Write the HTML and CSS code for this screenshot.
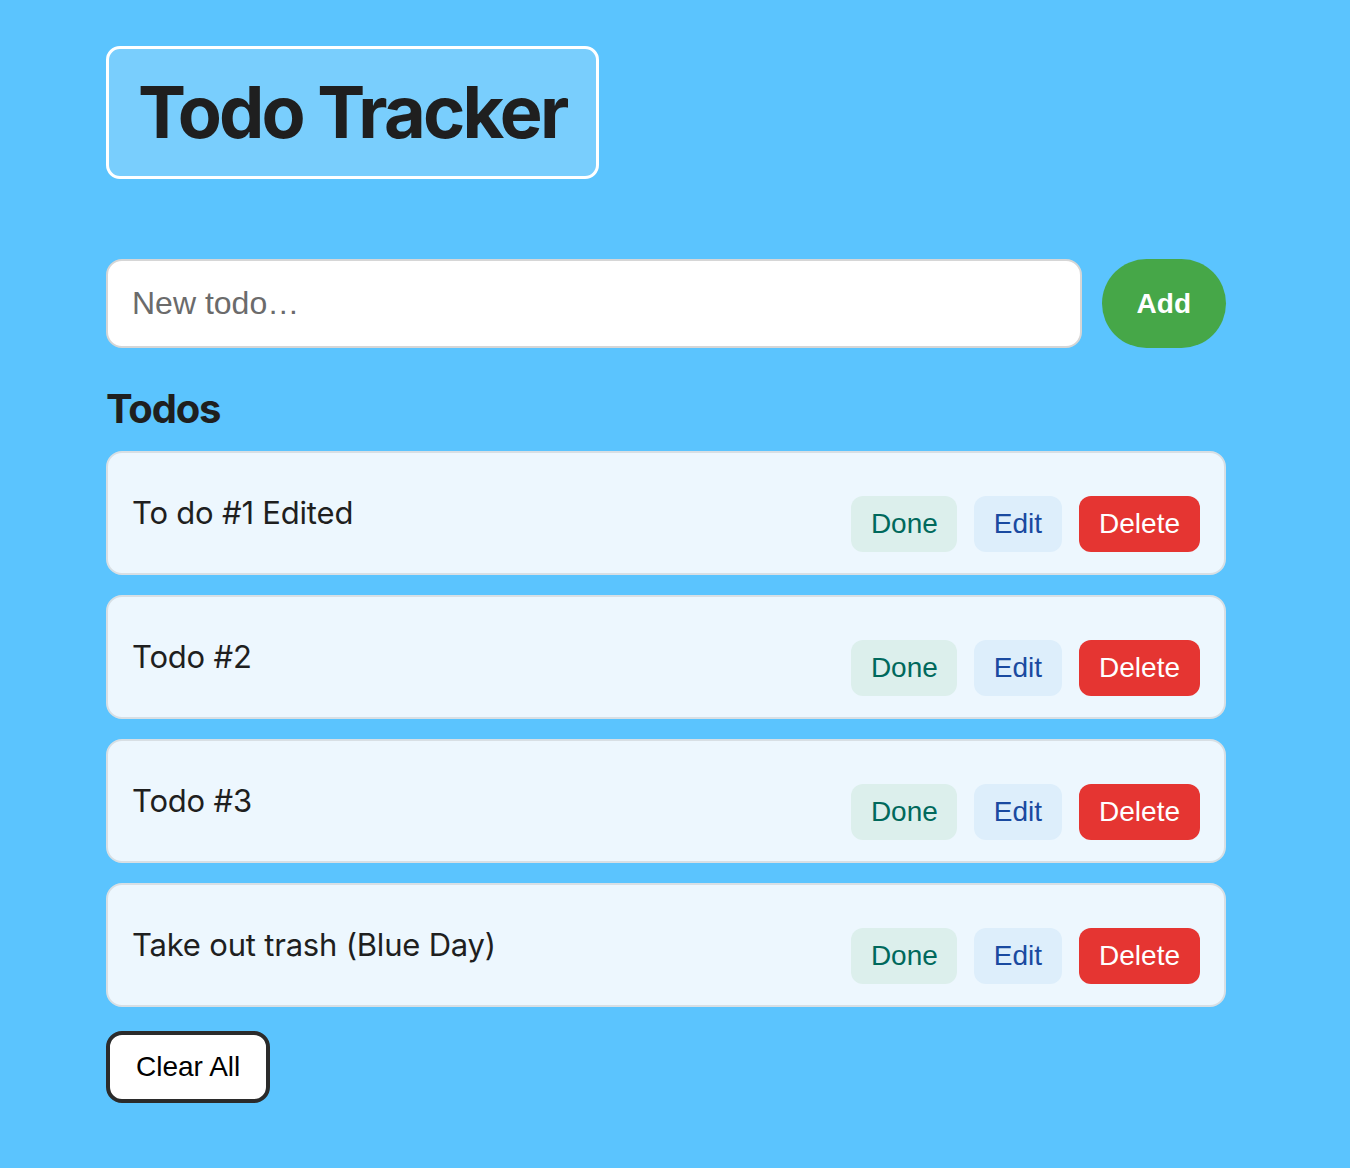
FILE: index.html
```html
<!DOCTYPE html>
<html lang="en">
<head>
    <meta charset="UTF-8">
    <meta name="viewport" content="width=device-width, initial-scale=1.0">
    <title>Todo Tracker</title>
    <link rel="stylesheet" href="styles.css">
</head>
<body>
    <div class="container">
        <h1 class="title">Todo Tracker</h1>

        <form class="add-form" onsubmit="return false;">
            <input type="text" class="todo-input" placeholder="New todo…">
            <button type="submit" class="add-btn">Add</button>
        </form>

        <h2 class="section-title">Todos</h2>

        <ul class="todo-list">
            <li class="todo-item">
                <span class="todo-text">To do #1 Edited</span>
                <div class="todo-actions">
                    <button class="btn btn-done">Done</button>
                    <button class="btn btn-edit">Edit</button>
                    <button class="btn btn-delete">Delete</button>
                </div>
            </li>
            <li class="todo-item">
                <span class="todo-text">Todo #2</span>
                <div class="todo-actions">
                    <button class="btn btn-done">Done</button>
                    <button class="btn btn-edit">Edit</button>
                    <button class="btn btn-delete">Delete</button>
                </div>
            </li>
            <li class="todo-item">
                <span class="todo-text">Todo #3</span>
                <div class="todo-actions">
                    <button class="btn btn-done">Done</button>
                    <button class="btn btn-edit">Edit</button>
                    <button class="btn btn-delete">Delete</button>
                </div>
            </li>
            <li class="todo-item">
                <span class="todo-text">Take out trash (Blue Day)</span>
                <div class="todo-actions">
                    <button class="btn btn-done">Done</button>
                    <button class="btn btn-edit">Edit</button>
                    <button class="btn btn-delete">Delete</button>
                </div>
            </li>
        </ul>

        <button class="clear-btn">Clear All</button>
    </div>
</body>
</html>
```

FILE: styles.css
```css
body {
    font-family: Inter, "Noto Sans", sans-serif;
    background-color: #5bc4fe;
    color: #1f1f1f;
    margin: 0;
    padding: 0;
}

.container {
    width: 1120px;
    margin-left: 106px;
    padding-top: 46px;
    padding-bottom: 40px;
}

/* Titelruta */
.title {
    display: inline-block;
    margin: 0;
    padding: 19px 30px 20px 29px;
    font-size: 72px;
    font-weight: 700;
    line-height: 88px;
    letter-spacing: -2.8px;
    color: #1f1f1f;
    background-color: #79cefd;
    border: 3px solid #fff;
    border-radius: 14px;
}

.add-form {
    display: flex;
    gap: 20px;
    margin-top: 80px;
}

.todo-input {
    flex: 1;
    font-family: "Liberation Sans", Arial, sans-serif;
    font-size: 32px;
    line-height: 37px;
    padding: 24px 24px;
    border: 2px solid #d6d6d6;
    border-radius: 16px;
    background-color: #fff;
    color: #222;
    outline: none;
}

.todo-input::placeholder {
    color: #6b6b6b;
}

.add-btn {
    font-family: "Liberation Sans", Arial, sans-serif;
    font-size: 28px;
    font-weight: 700;
    color: #fff;
    background-color: #46a748;
    border: none;
    border-radius: 999px;
    padding: 0 35px;
    cursor: pointer;
}

.section-title {
    font-size: 40px;
    font-weight: 700;
    margin: 37px 0 18px 0;
    line-height: 48px;
    letter-spacing: -1.2px;
}

.todo-list {
    list-style: none;
    margin: 0;
    padding: 0;
    display: flex;
    flex-direction: column;
    gap: 20px;
}

.todo-item {
    display: flex;
    justify-content: space-between;
    align-items: center;
    padding: 21px 24px;
    background-color: #edf7fe;
    border: 2px solid #d8dfe4;
    border-radius: 16px;
}

.todo-text {
    font-size: 31px;
    line-height: 48px;
    letter-spacing: -0.2px;
}

.todo-actions {
    display: flex;
    gap: 17px;
    margin-top: 22px;
}

.btn {
    font-family: "Liberation Sans", Arial, sans-serif;
    font-size: 28px;
    line-height: 32px;
    padding: 12px 20px;
    border: none;
    border-radius: 12px;
    cursor: pointer;
}

.btn-done {
    background-color: #dcefec;
    color: #00695c;
    padding: 12px 19px 12px 20px;
}

.btn-edit {
    background-color: #ddeefb;
    color: #1a4aa0;
}

.btn-delete {
    background-color: #e53532;
    color: #fff;
}

.clear-btn {
    margin-top: 24px;
    font-family: "Liberation Sans", Arial, sans-serif;
    font-size: 28px;
    line-height: 32px;
    padding: 16px 26px;
    color: #000;
    background-color: #fff;
    border: 4px solid #2b2b2b;
    border-radius: 16px;
    cursor: pointer;
}
```
